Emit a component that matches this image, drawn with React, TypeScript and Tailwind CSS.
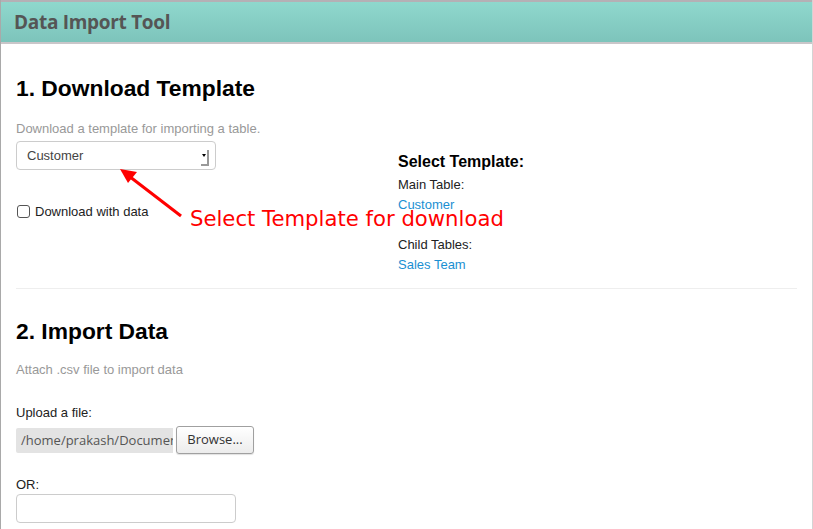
const App = () => {
  return (
    <div className="w-[813px] h-[529px] overflow-hidden bg-white font-['Liberation_Sans',Arial,sans-serif] text-[13px] text-[#222]">
      <div className="h-full border-l border-[#a9a9a9] border-r border-r-[#d4d4d4] flex flex-col">
        <div className="h-[44px] shrink-0 border-t-2 border-t-[#b5b0b5] border-b-2 border-b-[#c9c6c9] bg-gradient-to-b from-[#8fd8cd] to-[#7dc4bb] flex items-center pl-[13px]">
          <h3 className="font-['Open_Sans',sans-serif] font-bold text-[19px] text-[#555] tracking-[-0.3px]">Data Import Tool</h3>
        </div>

        <div className="px-[15px] relative">
          <h2 className="mt-[31px] text-[22.8px] leading-[26px] font-bold text-black">1. Download Template</h2>

          <div className="flex">
            <div className="w-[382px]">
              <p className="mt-[20px] text-[#999] leading-[16px]">Download a template for importing a table.</p>
              <div className="mt-[4px] w-[200px] h-[29px] border border-[#ccc] rounded-[4px] flex items-center justify-between pl-[10px] pr-[6px]">
                <span className="text-[#444]">Customer</span>
                <span className="relative w-[8px] h-[16px] mt-[4px]">
                  <span className="absolute right-0 top-0 w-[2px] h-[16px] bg-[#999]" />
                  <span className="absolute right-0 bottom-0 w-[8px] h-[2px] bg-[#999]" />
                  <span className="absolute right-[3px] top-[4px] w-0 h-0 border-l-[2px] border-r-[2px] border-t-[3px] border-l-transparent border-r-transparent border-t-black" />
                </span>
              </div>
              <label className="mt-[32px] flex items-center gap-[5px] pl-[1px]">
                <span className="w-[13px] h-[13px] border border-[#555] rounded-[3px] bg-white" />
                <span>Download with data</span>
              </label>
            </div>
            <div className="mt-[51px]">
              <h4 className="text-[16px] font-bold text-black leading-[20px]">Select Template:</h4>
              <p className="mt-[5px] leading-[16px]">Main Table:</p>
              <p className="mt-[4px] leading-[16px] text-[#1a8fd2]">Customer</p>
              <p className="mt-[24px] leading-[16px]">Child Tables:</p>
              <p className="mt-[4px] leading-[16px] text-[#1a8fd2]">Sales Team</p>
            </div>
          </div>

          <svg className="absolute left-[115px] top-[122px]" width="75" height="55" viewBox="0 0 75 55">
            <line x1="65" y1="50" x2="9" y2="7" stroke="#f00" strokeWidth="3" />
            <polygon points="4,3 21,6 12,17" fill="#f00" />
          </svg>
          <span className="absolute left-[189px] top-[162px] font-['DejaVu_Sans',sans-serif] text-[21.2px] leading-[26px] text-[#f00]">Select Template for download</span>

          <div className="mt-[15px] border-t border-[#eee]" />

          <h2 className="mt-[29px] text-[22.8px] leading-[26px] font-bold text-black">2. Import Data</h2>
          <p className="mt-[18px] text-[#999] leading-[16px]">Attach .csv file to import data</p>
          <p className="mt-[27px] leading-[16px]">Upload a file:</p>
          <div className="mt-[5px] flex items-center gap-[3px]">
            <div className="w-[157px] h-[25px] bg-[#e3e3e3] rounded-l-[2px] overflow-hidden whitespace-nowrap pl-[5px] font-['Open_Sans',sans-serif] text-[13px] leading-[25px] text-[#555]">
              /home/prakash/Documents/import.csv
            </div>
            <button className="w-[78px] h-[28px] border border-[#a0a0a0] rounded-[3px] bg-gradient-to-b from-white to-[#ececec] font-['Open_Sans',sans-serif] text-[13px] text-[#333] shadow-[0_1px_1px_rgba(0,0,0,0.12)]">
              Browse...
            </button>
          </div>
          <p className="mt-[23px] leading-[16px]">OR:</p>
          <div className="mt-[1px] w-[220px] h-[29px] border border-[#ccc] rounded-[4px]" />
        </div>
      </div>
    </div>
  );
};

export default App;
